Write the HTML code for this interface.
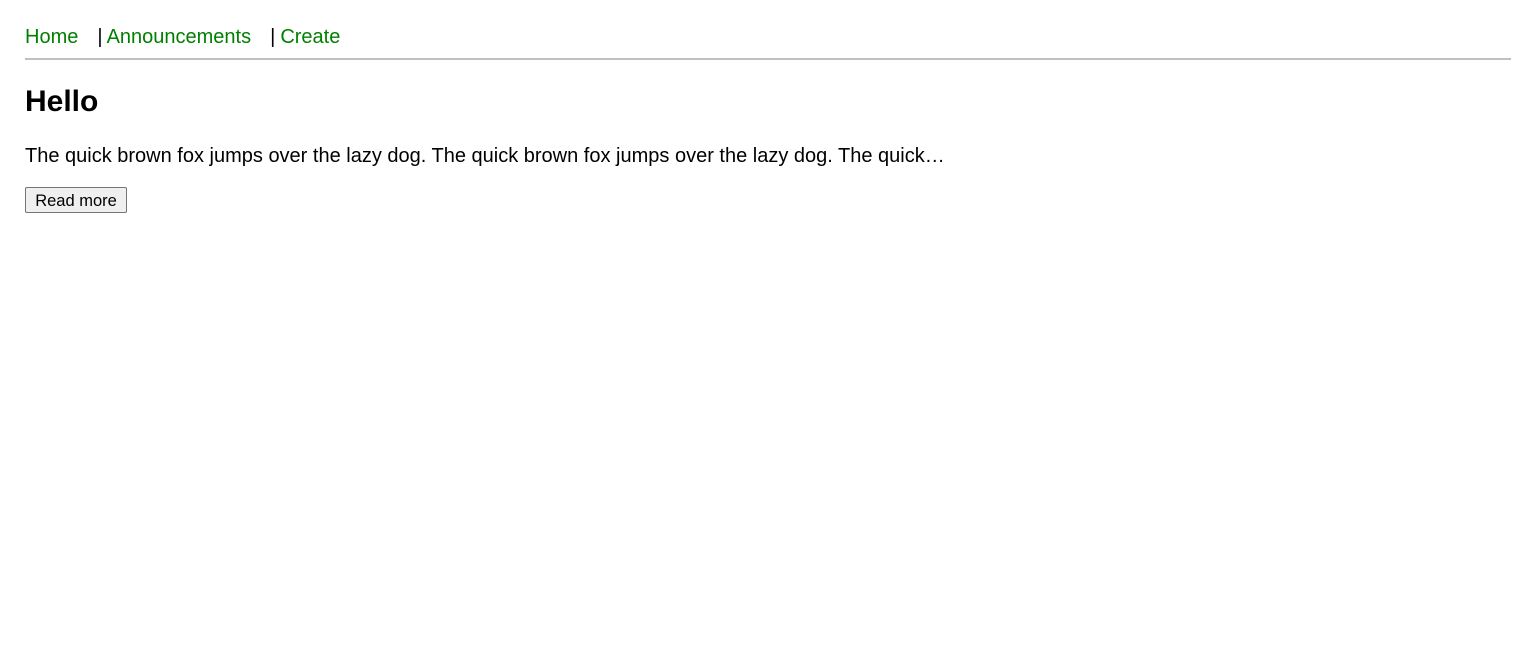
<!DOCTYPE html>
<html><head><style>
body{margin:0;background:#fff;font-family:"Liberation Sans",Arial,sans-serif;color:#000;}
.a{position:absolute;white-space:nowrap;line-height:1;}
.g{color:#008000;}
</style></head><body>
<div class="a" style="left:25px;top:27px;font-size:20px;"><span class="g">Home</span><span style="display:inline-block;width:19px"></span>|<span class="g" style="margin-left:4px">Announcements</span><span style="display:inline-block;width:19px"></span>|<span class="g" style="margin-left:5px">Create</span></div>
<div style="position:absolute;left:25px;top:58px;width:1486px;height:2px;background:#c0c0c0"></div>
<div class="a" style="left:25px;top:87px;font-size:30px;font-weight:bold;">Hello</div>
<div class="a" style="left:25px;top:146px;font-size:20px;">The quick brown fox jumps over the lazy dog. The quick brown fox jumps over the lazy dog. The quick…</div>
<div style="position:absolute;left:25px;top:187px;width:100px;height:24px;border:1px solid #767676;border-radius:2px;background:#efefef;font-size:16.5px;line-height:26px;text-align:center;">Read more</div>
</body></html>
